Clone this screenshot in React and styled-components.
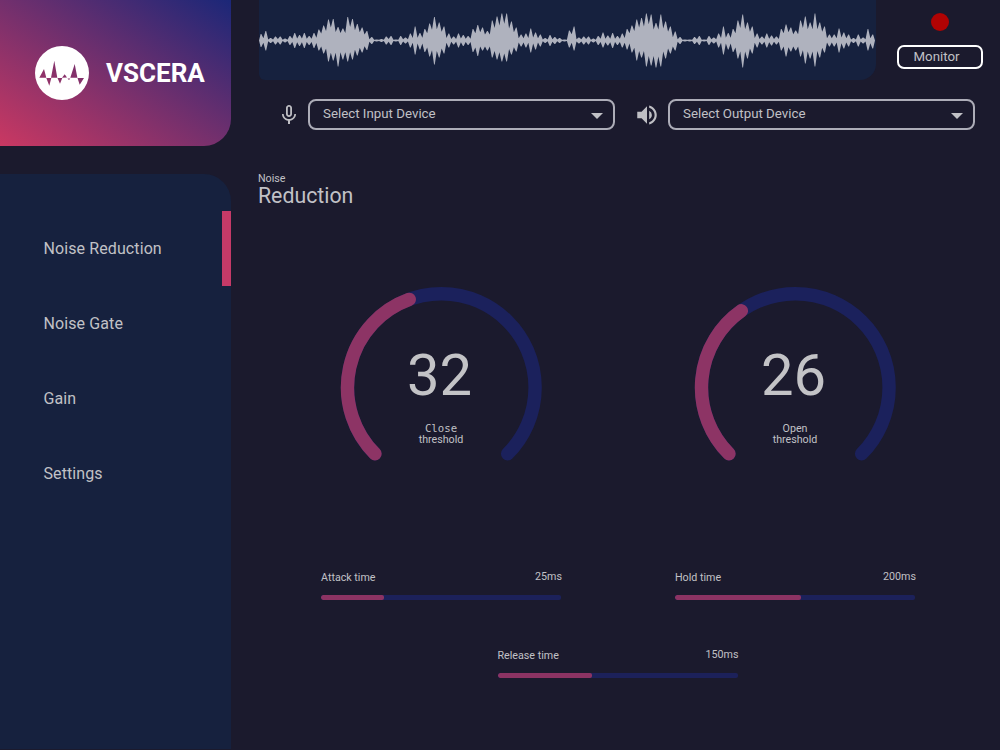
import React from "react";
import styled, { createGlobalStyle } from "styled-components";
import { MdMicNone, MdVolumeUp } from "react-icons/md";

const GlobalStyle = createGlobalStyle`
  * { box-sizing: border-box; }
  body {
    margin: 0;
    background: #1b1a2d;
    font-family: Roboto, "Liberation Sans", sans-serif;
    color: #c1c1c6;
  }
`;

const Shell = styled.div`
  display: flex;
  width: 1000px;
  height: 750px;
  overflow: hidden;
  background: #1b1a2d;
`;

const Sidebar = styled.aside`
  display: flex;
  flex-direction: column;
  gap: 28px;
  width: 231px;
  height: 749px;
  flex: none;
`;

const Brand = styled.div`
  display: flex;
  align-items: center;
  gap: 17px;
  height: 146px;
  padding-left: 35px;
  border-radius: 0 0 27px 0;
  background: linear-gradient(to top right, #ca3862 0%, #1b2778 100%);
  svg { flex: none; }
`;

const BrandName = styled.span`
  font-size: 26px;
  font-weight: 700;
  line-height: 30px;
  color: #fff;
`;

const Nav = styled.nav`
  flex: 1;
  padding-top: 37px;
  border-radius: 0 27px 0 0;
  background: #16213e;
`;

const NavItem = styled.div`
  display: flex;
  align-items: center;
  height: 75px;
  padding: 0 0 0 43.5px;
  font-size: 16px;
  letter-spacing: 0.1px;
  border-right: 9px solid ${(p) => (p.$active ? "#c53a68" : "transparent")};
`;

const Main = styled.main`
  flex: 1;
  display: flex;
  flex-direction: column;
  padding-left: 27px;
`;

const TopBar = styled.header`
  display: flex;
  height: 81px;
`;

const WavePanel = styled.div`
  width: 617px;
  height: 80px;
  margin-left: 1px;
  margin-right: 21px;
  background: #16213e;
  border-radius: 0 0 16px 6px;
  svg { display: block; }
`;

const MonitorColumn = styled.div`
  display: flex;
  flex-direction: column;
  align-items: center;
  gap: 14px;
  width: 86px;
  padding-top: 13px;
`;

const RecordDot = styled.span`
  width: 18px;
  height: 18px;
  border-radius: 50%;
  background: #b00303;
`;

const MonitorButton = styled.button`
  width: 86px;
  height: 24px;
  padding: 0 7px 0 0;
  border: 2px solid #fff;
  border-radius: 7px;
  background: none;
  color: #c1c1c6;
  font: 13.3px/20px Roboto, sans-serif;
`;

const Devices = styled.div`
  display: flex;
  align-items: center;
  height: 31px;
  margin-top: 18px;
`;

const IconSlot = styled.span`
  display: flex;
  align-items: center;
  justify-content: flex-start;
  width: ${(p) => p.$width}px;
  padding-left: ${(p) => p.$inset}px;
  color: #bfbfc4;
`;

const Select = styled.div`
  display: flex;
  align-items: center;
  justify-content: space-between;
  width: 307px;
  height: 31px;
  padding: 0 10px 2px 13px;
  border: 2px solid #adadb8;
  border-radius: 8px;
  font-size: 13.3px;
  svg { margin-top: 4px; }
`;

const Title = styled.h1`
  display: flex;
  flex-direction: column;
  margin: 42px 0 0;
  font-weight: 400;
  font-size: 21.3px;
  line-height: 22px;
  small {
    font-size: 10.7px;
    line-height: 13px;
  }
`;

const Dials = styled.section`
  display: flex;
  gap: 152px;
  padding: 80px 0 0 82px;
`;

const Dial = styled.div`
  display: grid;
  width: 202px;
  height: 180px;
  > * { grid-area: 1 / 1; }
`;

const DialText = styled.div`
  display: flex;
  flex-direction: column;
  align-items: center;
  padding-top: 54px;
  font-size: 10.7px;
  line-height: 11px;
  text-align: center;
`;

const DialValue = styled.span`
  margin: 0 3px 14px 0;
  font-size: 58px;
  line-height: 68px;
  color: #c3c3c6;
`;

const DialName = styled.span`
  font-family: ${(p) => (p.$mono ? '"DejaVu Sans Mono", monospace' : "inherit")};
`;

const Sliders = styled.section`
  display: grid;
  grid-template-columns: 241px 240px;
  column-gap: 113px;
  row-gap: 48px;
  padding: 103px 0 0 63px;
`;

const SliderBox = styled.div`
  width: 241px;
  ${(p) => p.$centered && "grid-column: 1 / 3; justify-self: center;"}
`;

const SliderHead = styled.div`
  display: flex;
  justify-content: space-between;
  height: 25px;
  font-size: 10.7px;
  line-height: 13px;
  span:first-child { padding-top: 1px; }
`;

const Track = styled.div`
  width: 240px;
  height: 5px;
  border-radius: 2px;
  background: #1c215a;
  overflow: hidden;
`;

const Fill = styled.div`
  height: 100%;
  border-radius: 2px;
  background: #8c3363;
`;

const PEAKS = [
  [6.5, 6.5], [9.5, 10], 2.5, 4, 4, 2, 4.5, 7.5, 5.5, 7.5, 4.5, 7.5, [11, 10], [15, 13], [21, 21], [21.5, 20],
  [13.5, 26], [12, 19], [23.5, 21], [21.5, 19], [16.5, 15], [13, 12], 9.5, 3.5, 1, 1.5, 4, 4.5, 1, 4.5, 3, 7,
  14, [7.5, 9], 11.5, [17, 16], [23.5, 24], [18, 17], [14, 13], 7, 4, 7, 5.5, 4.5, 11.5, 15.5, [13, 10], [9.5, 10],
  [20, 17], [24, 19], [27, 21], [27, 21], [19, 14], [13, 11], 6, 7, 12, [8, 9], 6, 2.5, 5.5, 3.5, 2.5, 1,
  [10, 7], [14, 10], 3, 4, 4, 2, 4.5, [8, 7], 5, 7.5, 4.5, 7, [11.5, 9], [15, 12], [21, 20], [22.5, 17],
  [27, 26], [26, 25], [17.5, 27], 26, [19, 18], [14, 13], [9, 10], 3.5, 1, 1, 3.5, 4.5, 1, 4.5, 3, 7,
  14, [7.5, 9], 11.5, [20, 18], [26, 27], 18, [14, 13], 7, 4, 7, 5, 4, [11.5, 10], 16, [13, 11], 10,
  [20, 16], [24, 23], 18, [27, 26], [18, 17], [14, 12], 6, 6, 12, 8, 6, 2.5, 6, 3, [11.5, 10], [6, 8],
].map((p) => (Array.isArray(p) ? p : [p, p]));

const STEP = 4.817;
const MID = 40.4;

function edge(side, dir) {
  const points = [];
  PEAKS.forEach((p, i) => {
    const x = 2 + i * STEP;
    const h = p[side];
    points.push([x - 0.35, MID + dir * h], [x + 0.35, MID + dir * h]);
    if (i < PEAKS.length - 1) {
      const low = Math.min(h, PEAKS[i + 1][side]);
      const valley = Math.max(0.7, low > 9 ? low * 0.62 : low * 0.35);
      points.push([x + STEP / 2, MID + dir * valley]);
    }
  });
  return points;
}

function Waveform() {
  const outline = [[0, MID], ...edge(0, -1), [616, MID], ...edge(1, 1).reverse()];
  return (
    <svg width="617" height="80" viewBox="0 0 617 80">
      <polygon fill="#afb2be" points={outline.map(([x, y]) => `${x.toFixed(2)},${y.toFixed(2)}`).join(" ")} />
    </svg>
  );
}

function Logo() {
  return (
    <svg width="54" height="54" viewBox="0 0 54 54">
      <path
        fill="#fff"
        fillRule="evenodd"
        d="M27 0a27 27 0 1 1 0 54a27 27 0 1 1 0-54Z
           M4.3 31.8L9 23l2.3 8.8Z M11.3 32l3 7.7l2-7.7Z M16 31.8l3.3-17.1l3 17.1Z
           M22.5 32l2.5 5.7l2.3-5.7Z M27 31.8l2.7-3.5l2.3 3.3Z M32.5 32.4l1.5 1.6l1.3-1.6Z
           M35.3 31.8L39.7 18l2.7 13.8Z M42.5 32l2.2 6.7L49 32Z"
      />
    </svg>
  );
}

const C = { x: 101.3, y: 100.5, r: 93.8 };

function arc(fraction) {
  const at = (deg) => {
    const a = (deg * Math.PI) / 180;
    return `${(C.x + C.r * Math.cos(a)).toFixed(2)} ${(C.y + C.r * Math.sin(a)).toFixed(2)}`;
  };
  const sweep = 270 * fraction;
  return `M${at(135)}A${C.r} ${C.r} 0 ${sweep > 180 ? 1 : 0} 1 ${at(135 + sweep)}`;
}

function Knob({ value, fraction, name, mono }) {
  return (
    <Dial>
      <svg width="202" height="180" viewBox="0 0 202 180" fill="none" strokeWidth="13.4" strokeLinecap="round">
        <path d={arc(1)} stroke="#1b215c" />
        <path d={arc(fraction)} stroke="#8d3465" />
      </svg>
      <DialText>
        <DialValue>{value}</DialValue>
        <DialName $mono={mono}>{name}</DialName>
        <span>threshold</span>
      </DialText>
    </Dial>
  );
}

function DeviceSelect({ label }) {
  return (
    <Select>
      <span>{label}</span>
      <svg width="12" height="6" viewBox="0 0 12 6">
        <path d="M0 0h12L6 6Z" fill="#c1c1c6" />
      </svg>
    </Select>
  );
}

function Slider({ label, value, percent, centered }) {
  return (
    <SliderBox $centered={centered}>
      <SliderHead>
        <span>{label}</span>
        <span>{value}</span>
      </SliderHead>
      <Track>
        <Fill style={{ width: `${percent}%` }} />
      </Track>
    </SliderBox>
  );
}

const PAGES = ["Noise Reduction", "Noise Gate", "Gain", "Settings"];

export default function App() {
  return (
    <>
      <GlobalStyle />
      <Shell>
        <Sidebar>
          <Brand>
            <Logo />
            <BrandName>VSCERA</BrandName>
          </Brand>
          <Nav>
            {PAGES.map((page, i) => (
              <NavItem key={page} $active={i === 0}>{page}</NavItem>
            ))}
          </Nav>
        </Sidebar>
        <Main>
          <TopBar>
            <WavePanel><Waveform /></WavePanel>
            <MonitorColumn>
              <RecordDot />
              <MonitorButton>Monitor</MonitorButton>
            </MonitorColumn>
          </TopBar>
          <Devices>
            <IconSlot $width={50} $inset={19.3}><MdMicNone size={24} /></IconSlot>
            <DeviceSelect label="Select Input Device" />
            <IconSlot $width={53} $inset={19}><MdVolumeUp size={26} /></IconSlot>
            <DeviceSelect label="Select Output Device" />
          </Devices>
          <Title>
            <small>Noise</small>
            Reduction
          </Title>
          <Dials>
            <Knob value={32} fraction={0.426} name="Close" mono />
            <Knob value={26} fraction={0.37} name="Open" />
          </Dials>
          <Sliders>
            <Slider label="Attack time" value="25ms" percent={26.2} />
            <Slider label="Hold time" value="200ms" percent={52.3} />
            <Slider label="Release time" value="150ms" percent={39.2} centered />
          </Sliders>
        </Main>
      </Shell>
    </>
  );
}
